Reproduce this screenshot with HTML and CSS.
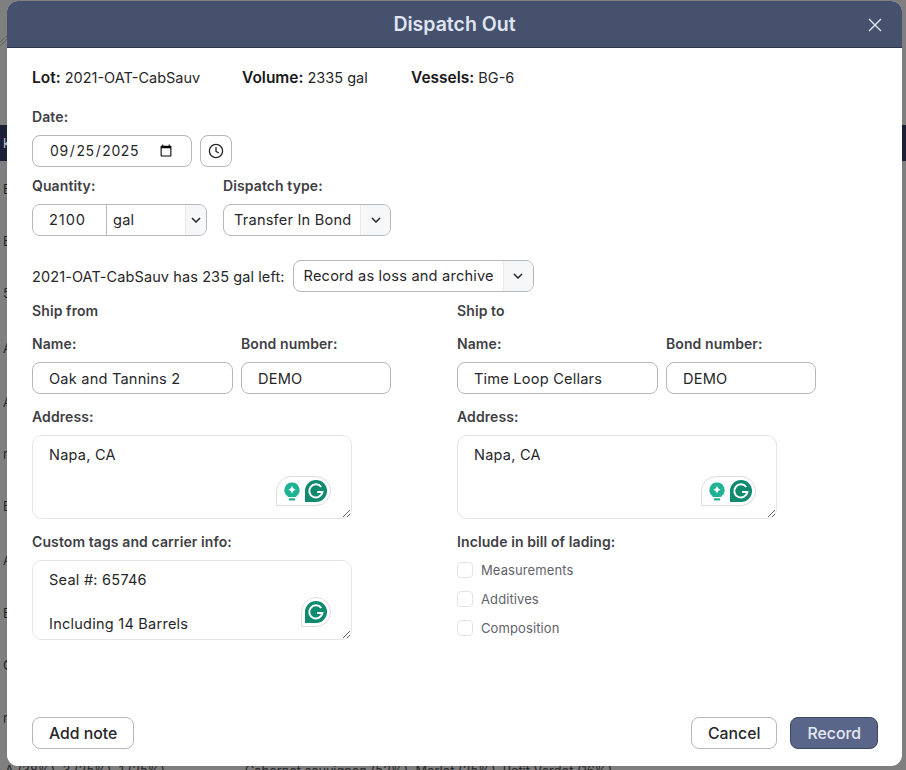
FILE: index.html
```html
<!DOCTYPE html>
<html lang="en">
<head>
    <meta charset="UTF-8">
    <meta name="viewport" content="width=device-width, initial-scale=1.0">
    <title>Dispatch Out</title>
    <link rel="stylesheet" href="styles.css">
</head>
<body>

    <!-- Page behind the dialog -->
    <div class="backdrop">
        <svg class="bg-hatch" width="8" height="12" viewBox="0 0 8 12" fill="none" stroke="#5c5c5c" stroke-width="0.8">
            <path d="M0 7 L7 1 M0 11 L7 4"/>
        </svg>
        <div class="bg-band bg-band-top"></div>
        <span class="bg-letter bg-k">k</span>
        <span class="bg-letter" style="top: 181px">E</span>
        <span class="bg-letter" style="top: 233px">E</span>
        <span class="bg-letter" style="top: 285px">5</span>
        <span class="bg-letter" style="top: 340px">A</span>
        <span class="bg-letter" style="top: 394px">A</span>
        <span class="bg-letter" style="top: 446px">n</span>
        <span class="bg-letter" style="top: 498px">E</span>
        <span class="bg-letter" style="top: 552px">A</span>
        <span class="bg-letter" style="top: 605px">E</span>
        <span class="bg-letter" style="top: 657px">C</span>
        <span class="bg-letter" style="top: 710px">n</span>
        <div class="bg-last-row">
            <span class="bg-first">A (38%), 3 (25%), 1 (25%)</span>
            <span>Cabernet sauvignon (52%), Merlot (25%), Petit Verdot (16%)</span>
        </div>
    </div>

    <!-- Dialog -->
    <div class="modal">
        <div class="modal-header">
            <h2>Dispatch Out</h2>
            <button class="close-btn" aria-label="Close">
                <svg width="14" height="14" viewBox="0 0 14 14" fill="none" stroke="#e3e8f2" stroke-width="1.4">
                    <path d="M1 1 L13 13 M13 1 L1 13"/>
                </svg>
            </button>
        </div>

        <div class="modal-body">
            <div class="summary">
                <span><b>Lot:</b> 2021-OAT-CabSauv</span>
                <span><b>Volume:</b> 2335 gal</span>
                <span><b>Vessels:</b> BG-6</span>
            </div>

            <label class="field-label date-label">Date:</label>
            <div class="date-row">
                <input class="control date-input" type="date" value="2025-09-25">
                <button class="clock-btn" aria-label="Use current time">
                    <svg width="16" height="16" viewBox="0 0 16 16" fill="none" stroke="#27272a" stroke-width="1.3">
                        <circle cx="8" cy="8" r="6.6"/>
                        <path d="M8 4 V8.3 L10.8 10"/>
                    </svg>
                </button>
            </div>

            <div class="qty-row">
                <div>
                    <label class="field-label">Quantity:</label>
                    <div class="group qty-group">
                        <input class="group-input" type="text" value="2100">
                        <div class="select-wrap unit-select">
                            <select><option>gal</option></select>
                            <span class="chevron"><svg width="10" height="6" viewBox="0 0 10 6" fill="none" stroke="#27272a" stroke-width="1.5"><path d="M1 1 L5 5 L9 1"/></svg></span>
                        </div>
                    </div>
                </div>
                <div>
                    <label class="field-label">Dispatch type:</label>
                    <div class="group select-wrap type-select">
                        <select><option>Transfer In Bond</option></select>
                        <span class="chevron"><svg width="10" height="6" viewBox="0 0 10 6" fill="none" stroke="#27272a" stroke-width="1.5"><path d="M1 1 L5 5 L9 1"/></svg></span>
                    </div>
                </div>
            </div>

            <div class="left-row">
                <span>2021-OAT-CabSauv has 235 gal left:</span>
                <div class="group select-wrap loss-select">
                    <select><option>Record as loss and archive</option></select>
                    <span class="chevron"><svg width="10" height="6" viewBox="0 0 10 6" fill="none" stroke="#27272a" stroke-width="1.5"><path d="M1 1 L5 5 L9 1"/></svg></span>
                </div>
            </div>

            <div class="ship-grid">
                <div class="ship-col">
                    <div class="ship-title">Ship from</div>
                    <div class="name-row">
                        <div>
                            <label class="field-label">Name:</label>
                            <input class="control name-input" type="text" value="Oak and Tannins 2">
                        </div>
                        <div>
                            <label class="field-label">Bond number:</label>
                            <input class="control bond-input" type="text" value="DEMO">
                        </div>
                    </div>
                    <label class="field-label address-label">Address:</label>
                    <div class="area-wrap">
                        <textarea class="area address-area">Napa, CA</textarea>
                        <div class="gram-badge">
                            <svg class="bulb" width="16" height="19" viewBox="0 0 16 19">
                                <path d="M8 0.5 a7.5 7.5 0 0 1 4.4 13.6 V15 H3.6 V14.1 A7.5 7.5 0 0 1 8 0.5 Z" fill="#1fb394"/>
                                <path d="M8 3.6 Q8.6 7 11.6 7.7 Q8.6 8.4 8 11.6 Q7.4 8.4 4.4 7.7 Q7.4 7 8 3.6 Z" fill="#fff"/>
                                <rect x="4.8" y="16.2" width="6.4" height="2.2" rx="1" fill="#1fb394"/>
                            </svg>
                            <svg class="gmark" width="22" height="22" viewBox="0 0 22 22">
                                <path d="M11 0 a11 11 0 0 1 0 22 H0 V11 A11 11 0 0 1 11 0 Z" fill="#0f8a6e"/>
                                <path d="M16.2 7 A6.6 6.6 0 1 0 17.4 12 H12.2" fill="none" stroke="#fff" stroke-width="2"/>
                            </svg>
                        </div>
                    </div>
                    <label class="field-label tags-label">Custom tags and carrier info:</label>
                    <div class="area-wrap">
                        <textarea class="area tags-area">Seal #: 65746

Including 14 Barrels</textarea>
                        <div class="gram-badge single">
                            <svg class="gmark" width="22" height="22" viewBox="0 0 22 22">
                                <path d="M11 0 a11 11 0 0 1 0 22 H0 V11 A11 11 0 0 1 11 0 Z" fill="#0f8a6e"/>
                                <path d="M16.2 7 A6.6 6.6 0 1 0 17.4 12 H12.2" fill="none" stroke="#fff" stroke-width="2"/>
                            </svg>
                        </div>
                    </div>
                </div>

                <div class="ship-col">
                    <div class="ship-title">Ship to</div>
                    <div class="name-row">
                        <div>
                            <label class="field-label">Name:</label>
                            <input class="control name-input" type="text" value="Time Loop Cellars">
                        </div>
                        <div>
                            <label class="field-label">Bond number:</label>
                            <input class="control bond-input" type="text" value="DEMO">
                        </div>
                    </div>
                    <label class="field-label address-label">Address:</label>
                    <div class="area-wrap">
                        <textarea class="area address-area">Napa, CA</textarea>
                        <div class="gram-badge">
                            <svg class="bulb" width="16" height="19" viewBox="0 0 16 19">
                                <path d="M8 0.5 a7.5 7.5 0 0 1 4.4 13.6 V15 H3.6 V14.1 A7.5 7.5 0 0 1 8 0.5 Z" fill="#1fb394"/>
                                <path d="M8 3.6 Q8.6 7 11.6 7.7 Q8.6 8.4 8 11.6 Q7.4 8.4 4.4 7.7 Q7.4 7 8 3.6 Z" fill="#fff"/>
                                <rect x="4.8" y="16.2" width="6.4" height="2.2" rx="1" fill="#1fb394"/>
                            </svg>
                            <svg class="gmark" width="22" height="22" viewBox="0 0 22 22">
                                <path d="M11 0 a11 11 0 0 1 0 22 H0 V11 A11 11 0 0 1 11 0 Z" fill="#0f8a6e"/>
                                <path d="M16.2 7 A6.6 6.6 0 1 0 17.4 12 H12.2" fill="none" stroke="#fff" stroke-width="2"/>
                            </svg>
                        </div>
                    </div>
                    <label class="field-label tags-label">Include in bill of lading:</label>
                    <div class="checks">
                        <label class="check"><input type="checkbox"><span>Measurements</span></label>
                        <label class="check"><input type="checkbox"><span>Additives</span></label>
                        <label class="check"><input type="checkbox"><span>Composition</span></label>
                    </div>
                </div>
            </div>
        </div>

        <div class="modal-footer">
            <button class="btn">Add note</button>
            <div class="footer-right">
                <button class="btn">Cancel</button>
                <button class="btn btn-primary">Record</button>
            </div>
        </div>
    </div>

</body>
</html>
```

FILE: styles.css
```css
* {
    margin: 0;
    padding: 0;
    box-sizing: border-box;
}
html, body {
    height: 100%;
}
body {
    width: 906px;
    height: 770px;
    overflow: hidden;
    position: relative;
    font-family: 'Inter', 'Liberation Sans', sans-serif;
    font-size: 14.5px;
    color: #27272a;
    background-color: #7f7f80;
}

/* Page behind the dialog */
.backdrop {
    position: absolute;
    inset: 0;
    overflow: hidden;
    background-color: #7f7f80;
}
.bg-hatch {
    position: absolute;
    left: 0;
    top: 35px;
}
.bg-band {
    position: absolute;
    left: 0;
    right: 0;
    background-color: #1b2036;
}
.bg-band-top {
    top: 125px;
    height: 36px;
}
.bg-letter {
    position: absolute;
    left: 3px;
    font-size: 13px;
    color: #262626;
}
.bg-k {
    top: 135px;
    color: #b9bfd0;
}
.bg-last-row {
    position: absolute;
    left: 5px;
    top: 763px;
    display: flex;
    font-size: 12.8px;
    color: #262626;
    white-space: nowrap;
}
.bg-first {
    width: 240px;
}

/* Dialog */
.modal {
    position: absolute;
    left: 7px;
    top: 1px;
    width: 895px;
    height: 765px;
    background-color: #fff;
    border-radius: 11px;
    overflow: hidden;
    display: flex;
    flex-direction: column;
}
.modal-header {
    height: 47px;
    flex-shrink: 0;
    position: relative;
    display: flex;
    align-items: center;
    justify-content: center;
    background-color: #46516e;
    border-bottom: 1px solid #2f3648;
}
.modal-header h2 {
    font-size: 19.5px;
    font-weight: 600;
    color: #dfe5f1;
}
.close-btn {
    position: absolute;
    right: 20px;
    top: 17px;
    width: 14px;
    height: 14px;
    display: flex;
    background: none;
    border: none;
}
.modal-body {
    flex: 1;
    padding: 0 25px;
}
.summary {
    display: flex;
    height: 20px;
    margin-top: 20px;
    line-height: 20px;
    color: #27272a;
}
.summary span:nth-child(1) {
    width: 210px;
}
.summary span:nth-child(2) {
    width: 169px;
}
.summary b {
    font-size: 15.5px;
    font-weight: 600;
    color: #18181b;
}

/* Form bits */
.field-label {
    display: block;
    height: 18px;
    line-height: 18px;
    font-size: 14px;
    letter-spacing: 0.1px;
    font-weight: 600;
    color: #3f3f46;
    margin-bottom: 9px;
}
.date-label {
    margin-top: 20px;
}
.control, .group, .clock-btn {
    height: 32px;
    border: 1px solid #b4b6bb;
    border-radius: 8px;
    background-color: #fff;
}
.control {
    font-family: inherit;
    font-size: 14.6px;
    letter-spacing: 0.2px;
    color: #27272a;
    padding: 1px 16px 0;
}
.date-row {
    display: flex;
    gap: 8px;
}
.date-input {
    width: 160px;
    font-size: 14px;
    letter-spacing: 0.6px;
    padding: 0 16px 1px;
}
.clock-btn {
    width: 32px;
    display: flex;
    align-items: center;
    justify-content: center;
}
.qty-row {
    display: flex;
    gap: 16px;
    margin-top: 10px;
}
.group {
    display: flex;
    overflow: hidden;
}
.qty-group {
    width: 175px;
}
.group-input {
    width: 74px;
    border: none;
    border-right: 1px solid #b4b6bb;
    outline: none;
    padding-left: 16px;
    font-family: inherit;
    font-size: 14.6px;
    letter-spacing: 0.9px;
    color: #27272a;
}
.select-wrap {
    position: relative;
    flex: 1;
}
.select-wrap select {
    width: 100%;
    height: 100%;
    appearance: none;
    border: none;
    outline: none;
    background: none;
    font-family: inherit;
    font-size: 14.6px;
    letter-spacing: 0.2px;
    color: #27272a;
    padding-left: 6px;
}
.chevron {
    position: absolute;
    right: 0;
    top: 0;
    bottom: 0;
    width: 21px;
    display: flex;
    align-items: center;
    justify-content: center;
    background-color: #f6f7f9;
    border-left: 1px solid #e9eaed;
    pointer-events: none;
}
.type-select {
    width: 168px;
    flex: none;
}
.type-select select, .loss-select select {
    padding-left: 10px;
}
.type-select .chevron, .loss-select .chevron {
    width: 30px;
}
.left-row {
    display: flex;
    align-items: center;
    gap: 8px;
    margin-top: 24px;
    letter-spacing: 0.1px;
}
.loss-select {
    width: 241px;
    flex: none;
}
.ship-grid {
    display: grid;
    grid-template-columns: 425px 1fr;
    margin-top: 10px;
}
.ship-title {
    height: 18px;
    line-height: 18px;
    font-size: 14px;
    letter-spacing: 0.1px;
    font-weight: 600;
    color: #3f3f46;
    margin-bottom: 15px;
}
.name-row {
    display: flex;
    gap: 8px;
}
.name-input {
    width: 201px;
}
.bond-input {
    width: 150px;
}
.address-label {
    margin-top: 14px;
}
.area-wrap {
    position: relative;
    width: 320px;
}
.area {
    display: block;
    width: 320px;
    border: 1px solid #e4e4e7;
    border-radius: 10px;
    padding: 8px 16px;
    font-family: inherit;
    font-size: 14.5px;
    line-height: 22px;
    letter-spacing: 0.25px;
    color: #27272a;
    outline: none;
}
.address-area {
    height: 84px;
}
.tags-area {
    height: 80px;
}
.tags-label {
    margin-top: 14px;
}

/* Grammarly widget on the textareas */
.gram-badge {
    position: absolute;
    right: 21px;
    bottom: 13px;
    height: 30px;
    width: 55px;
    display: flex;
    align-items: center;
    justify-content: space-between;
    padding: 0 3px 0 7px;
    background-color: #fff;
    border: 1px solid #dcdce6;
    border-radius: 15px 15px 15px 0;
}
.gram-badge.single {
    width: 30px;
    height: 30px;
    bottom: 13px;
    padding: 3px;
    border-radius: 15px 15px 15px 0;
}
.checks {
    display: flex;
    flex-direction: column;
    gap: 13px;
    margin-top: 11px;
}
.check {
    display: flex;
    align-items: center;
    gap: 8px;
    height: 16px;
    font-size: 13px;
    letter-spacing: 0.1px;
    color: #63636b;
}
.check input {
    appearance: none;
    width: 16px;
    height: 16px;
    border: 1.5px solid #e2e3e6;
    border-radius: 4px;
    background-color: #fff;
}

/* Footer buttons */
.modal-footer {
    flex-shrink: 0;
    display: flex;
    justify-content: space-between;
    padding: 0 24px 17px 25px;
}
.footer-right {
    display: flex;
    gap: 13px;
}
.btn {
    height: 32px;
    padding: 0 16px;
    border: 1px solid #b4b6bb;
    border-radius: 8px;
    background-color: #fff;
    font-family: inherit;
    font-size: 15.8px;
    font-weight: 500;
    color: #27272a;
}
.btn-primary {
    background-color: #5a6689;
    border-color: #3d4660;
    color: #e5e9f3;
}
```
